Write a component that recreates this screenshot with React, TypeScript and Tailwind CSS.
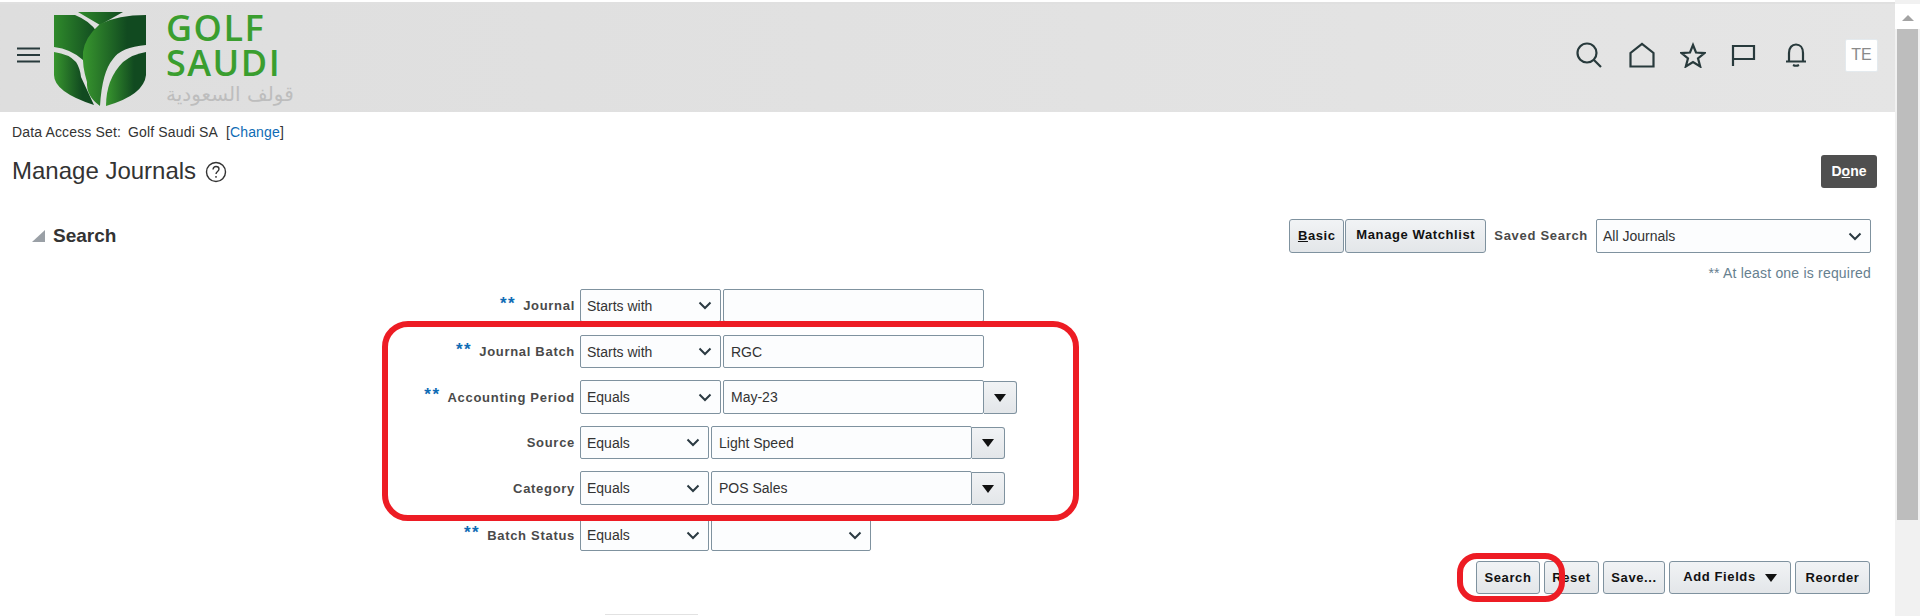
const sans = "font-['Liberation_Sans',Arial,sans-serif]";

function Chevron() {
  return (
    <svg width="14" height="9" viewBox="0 0 14 9" className="shrink-0">
      <path d="M1.5 1.5 7 7l5.5-5.5" fill="none" stroke="#2b3a42" strokeWidth="2" />
    </svg>
  );
}

function Arrow() {
  return (
    <svg width="12" height="8" viewBox="0 0 12 8">
      <path d="M0 0h12L6 8z" fill="#111" />
    </svg>
  );
}

function Sel({ value, w }: { value: string; w: string }) {
  return (
    <div className={`${w} h-full flex items-center justify-between pl-[6px] pr-[8px] bg-[#fcfdfe] border border-[#7f929f] rounded-[2px] text-[14px] text-[#333]`}>
      <span className="pt-[1px]">{value}</span>
      <Chevron />
    </div>
  );
}

function Inp({ value, w }: { value: string; w: string }) {
  return (
    <div className={`${w} h-full flex items-center pl-[7px] pt-[1px] bg-[#fcfdfe] border border-[#7f929f] rounded-[2px] text-[14px] text-[#333]`}>
      {value}
    </div>
  );
}

function Drop() {
  return (
    <div className="w-[33px] h-[calc(100%-1px)] self-end flex items-center justify-center border border-l-0 border-[#7f929f] rounded-r-[3px] bg-linear-to-b from-[#f1f3f5] to-[#e3e6e9]">
      <Arrow />
    </div>
  );
}

function Btn({ children, w }: { children: React.ReactNode; w: string }) {
  return (
    <div className={`${w} h-full flex items-center justify-center border border-[#7f929f] rounded-[3px] bg-linear-to-b from-[#f1f3f5] to-[#e3e6e9] text-[13px] font-bold tracking-[0.6px] text-[#111]`}>
      {children}
    </div>
  );
}

function Row({ label, req, h, mt, children }: { label: string; req?: boolean; h: string; mt: string; children: React.ReactNode }) {
  return (
    <div className={`flex ${h} ${mt}`}>
      <div className="w-[575px] shrink-0 flex items-center justify-end pt-[1px] text-[13px] font-bold tracking-[0.7px] text-[#4a4a4a]">
        {req && <span className="mr-[7px] mb-[5px] text-[#0f6cb5] text-[17px] tracking-[1.5px]">**</span>}
        {label}
      </div>
      <div className="flex gap-[2px] ml-[5px] h-full">{children}</div>
    </div>
  );
}

function Logo() {
  return (
    <svg width="95" height="97" viewBox="53 9 95 97" className="shrink-0">
      <defs>
        <linearGradient id="a" x1="0" x2="1" y1="0" y2="0">
          <stop offset="0" stopColor="#2f8a2b" />
          <stop offset="1" stopColor="#114a20" />
        </linearGradient>
        <linearGradient id="b" x1="0" x2="1" y1="0" y2="0">
          <stop offset="0" stopColor="#38962e" />
          <stop offset="0.7" stopColor="#114a20" />
        </linearGradient>
      </defs>
      <path d="M78 10h45l-23 13z" fill="url(#a)" />
      <path d="M54 13h21q15 6 22 17-12 11-14 28-12-11-29-13z" fill="url(#a)" />
      <path d="M146 13v30q-25 2-33 14-11 13-13 47-14-10-13-24-5-16-4-30 2-15 17-28 18-9 46-9z" fill="url(#b)" />
      <path d="M146 50v23q-2 20-40 31 0-27 17-44 10-8 23-10z" fill="url(#b)" />
      <path d="M54 50q15 2 22 10 4 6 5 15l13 28Q54 90 54 73z" fill="url(#b)" />
    </svg>
  );
}

function TopIcon({ children, ml }: { children: React.ReactNode; ml: string }) {
  return (
    <svg viewBox="0 0 26 26" className={`w-[26px] h-[26px] ${ml} shrink-0`} fill="none" stroke="#283a3c" strokeWidth="2.2">
      {children}
    </svg>
  );
}

export default function App() {
  return (
    <div className={`${sans} relative w-[1920px] h-[616px] overflow-hidden bg-white flex`}>
      <div className="w-[1895px] shrink-0">
        <div className="mt-[2px] border-t-2 border-[#e0e0e0] h-[110px] bg-linear-to-r from-[#dedede] to-[#e5e5e5] flex items-center pl-[17px]">
          <svg width="23" height="16" viewBox="0 0 23 16" className="shrink-0 mt-[-6px]">
            <path d="M0 1.5h23M0 8h23M0 14.5h23" stroke="#283a3c" strokeWidth="2.2" />
          </svg>
          <div className="ml-[13px] mt-[2px]"><Logo /></div>
          <div className="ml-[18px] flex flex-col font-['Open_Sans',sans-serif] font-semibold text-[#3a9e2f] text-[36px] leading-[35px] tracking-[1.5px]">
            <span>GOLF</span>
            <span>SAUDI</span>
            <span className="text-[#bdbdbd] text-[20px] leading-[24px] font-normal font-['DejaVu_Sans',sans-serif] tracking-normal mt-[2px]">قولف السعودية</span>
          </div>
          <div className="ml-auto flex items-center pr-[17px] mt-[-6px]">
            <TopIcon ml="">
              <circle cx="11" cy="11" r="9.5" />
              <path d="m18 18 7 7" />
            </TopIcon>
            <TopIcon ml="ml-[27px]">
              <path d="M1.500 24.500V11L13 2l11.500 9v13.500z" />
            </TopIcon>
            <TopIcon ml="ml-[25px]">
              <path d="m13 3 3 7.500 8.500.6-6.500 5.300 2.200 8.100L13 20l-7.200 4.500L8 16.400 1.500 11.100l8.500-.6z" />
            </TopIcon>
            <TopIcon ml="ml-[25px]">
              <path d="M2 3v21M2 4h21v13H2" />
            </TopIcon>
            <TopIcon ml="ml-[27px]">
              <path d="M2 19.500h20M5 19.500V11c0-5.500 3-8.500 7-8.500s7 3 7 8.500v8.500M9 23q3 1.500 6 0" />
            </TopIcon>
            <div className="ml-[35px] w-[33px] h-[33px] flex items-center justify-center bg-white border border-[#e4eaee] rounded-[2px] text-[16px] text-[#8a8a8a]">TE</div>
          </div>
        </div>

        <div className="h-[40px] pl-[12px] flex items-center text-[14px] tracking-[0.15px] text-[#333]">
          <span>Data Access Set:</span>
          <span className="ml-[7px]">Golf Saudi SA</span>
          <span className="ml-[8px]">[<span className="text-[#0f6cb5]">Change</span>]</span>
        </div>

        <div className="h-[38px] pl-[12px] pr-[18px] flex items-center text-[24px] text-[#333]">
          <span>Manage Journals</span>
          <svg width="22" height="22" viewBox="0 0 22 22" className="ml-[9px] mt-[2px]" fill="none" stroke="#333" strokeWidth="1.400">
            <circle cx="11" cy="11" r="9.500" />
            <path d="M8 8.500q.4-3 3-3 3 0 3 2.600c0 2.400-3 2.400-3 5" />
            <path d="M11 15v1.800" />
          </svg>
          <div className="ml-auto w-[56px] h-[33px] flex items-center justify-center rounded-[3px] bg-[#4f4f4f] text-white text-[14px] font-bold">
            <span>D<span className="underline">o</span>ne</span>
          </div>
        </div>

        <div className="mt-[29px] h-[34px] pl-[32px] pr-[24px] flex items-center">
          <svg width="14" height="14" viewBox="0 0 14 14" className="shrink-0">
            <path d="M13 1v12H0z" fill="#9aa0a6" />
          </svg>
          <span className="ml-[7px] text-[19px] font-bold text-[#333]">Search</span>
          <div className="ml-auto flex h-full items-center">
            <div className="flex h-full gap-[1px]">
              <Btn w="w-[55px]"><span><span className="underline">B</span>asic</span></Btn>
              <Btn w="w-[141px]"><span className="mb-[2px]">Manage Watchlist</span></Btn>
            </div>
            <span className="ml-[8px] text-[13px] font-bold tracking-[0.7px] text-[#4a4a4a]">Saved Search</span>
            <div className="ml-[8px] h-full"><Sel value="All Journals" w="w-[275px]" /></div>
          </div>
        </div>
        <div className="mt-[12px] pr-[24px] text-right text-[14px] tracking-[0.2px] leading-[16px] text-[#66808f]">** At least one is required</div>

        <Row label="Journal" req h="h-[33px]" mt="mt-[8px]">
          <Sel value="Starts with" w="w-[141px]" />
          <Inp value="" w="w-[261px]" />
        </Row>
        <Row label="Journal Batch" req h="h-[33px]" mt="mt-[13px]">
          <Sel value="Starts with" w="w-[141px]" />
          <Inp value="RGC" w="w-[261px]" />
        </Row>
        <Row label="Accounting Period" req h="h-[34px]" mt="mt-[12px]">
          <Sel value="Equals" w="w-[141px]" />
          <div className="flex h-full">
            <Inp value="May-23" w="w-[261px]" />
            <Drop />
          </div>
        </Row>
        <Row label="Source" h="h-[33px]" mt="mt-[12px]">
          <Sel value="Equals" w="w-[129px]" />
          <div className="flex h-full">
            <Inp value="Light Speed" w="w-[261px]" />
            <Drop />
          </div>
        </Row>
        <Row label="Category" h="h-[34px]" mt="mt-[12px]">
          <Sel value="Equals" w="w-[129px]" />
          <div className="flex h-full">
            <Inp value="POS Sales" w="w-[261px]" />
            <Drop />
          </div>
        </Row>
        <Row label="Batch Status" req h="h-[32px]" mt="mt-[14px]">
          <Sel value="Equals" w="w-[129px]" />
          <Sel value="" w="w-[160px]" />
        </Row>

        <div className="mt-[10px] h-[33px] pr-[25px] flex justify-end gap-[4px]">
          <Btn w="w-[64px]">Search</Btn>
          <Btn w="w-[55px]">Reset</Btn>
          <Btn w="w-[62px]">Save...</Btn>
          <Btn w="w-[122px]"><span className="mr-[9px] mb-[2px]">Add Fields</span><Arrow /></Btn>
          <Btn w="w-[75px]">Reorder</Btn>
        </div>
        <div className="mt-[20px] ml-[605px] w-[93px] h-[1px] bg-[#e2e2e2]" />
      </div>

      <div className="w-[25px] shrink-0 bg-[#f1f1f1] flex flex-col items-center pt-[4px]">
        <div className="h-[25px] w-full flex items-center justify-center bg-white pt-[2px]">
          <svg width="12" height="6" viewBox="0 0 12 6"><path d="M6 0l6 6H0z" fill="#a3a3a3" /></svg>
        </div>
        <div className="w-[21px] h-[491px] bg-[#bdbdbd]" />
      </div>

      <div className="absolute left-[382px] top-[321px] w-[697px] h-[200px] border-[6px] border-[#ed1c24] rounded-[26px] pointer-events-none" />
      <div className="absolute left-[1457px] top-[553px] w-[108px] h-[49px] border-[6px] border-[#ed1c24] rounded-[20px] pointer-events-none" />
    </div>
  );
}
